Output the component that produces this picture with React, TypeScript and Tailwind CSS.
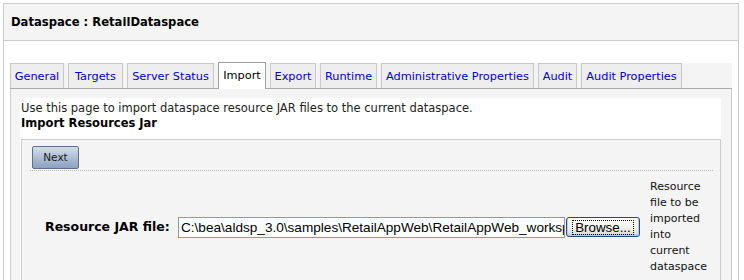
import React from 'react';

const tabs = [
  { label: 'General', w: 'w-[54px]' },
  { label: 'Targets', w: 'w-[55px]' },
  { label: 'Server Status', w: 'w-[87px]' },
  { label: 'Import', w: 'w-[48px]', active: true },
  { label: 'Export', w: 'w-[46px]' },
  { label: 'Runtime', w: 'w-[57px]' },
  { label: 'Administrative Properties', w: 'w-[153px]' },
  { label: 'Audit', w: 'w-[39px]' },
  { label: 'Audit Properties', w: 'w-[101px]' },
];

function Tab({ label, w, active }: { label: string; w: string; active?: boolean }) {
  if (active) {
    return (
      <div className={`${w} h-[27px] -mb-[1px] bg-white border border-b-0 border-[#9c9c9c] flex items-center justify-center pt-[1px] text-black whitespace-nowrap`}>
        {label}
      </div>
    );
  }
  return (
    <div className={`${w} h-[25px] bg-[#eeeeee] border border-b-0 border-[#c8c8c8] flex items-center justify-center pt-[2px] text-[#0000cc] whitespace-nowrap`}>
      {label}
    </div>
  );
}

export default function App() {
  return (
    <div className="h-[280px] overflow-hidden bg-white pl-[3px] pt-[3px] pr-[5px] font-['DejaVu_Sans',sans-serif] text-[11px] text-[#111]">
      <div className="border border-[#cccccc] pb-[40px]">
        <div className="h-[37px] bg-[#f4f4f4] border-b border-[#cccccc] flex items-center pl-[7px] pt-[1px] font-bold text-[11.6px] text-black">
          Dataspace : RetailDataspace
        </div>

        <div className="px-[6px] pt-[22px]">
          {/* tab strip */}
          <div className="flex items-end gap-[4px] h-[26px] bg-[#f4f4f4] border-b border-[#a9a9a9] text-[11.3px]">
            {tabs.map(t => (
              <Tab key={t.label} label={t.label} w={t.w} active={t.active} />
            ))}
          </div>

          {/* panel */}
          <div className="bg-[#f4f4f4] border-x border-[#cccccc] pl-[9px] pr-[10px] pt-[9px]">
            <div className="bg-white">
              <div className="pl-[1px] pt-[3px] leading-[14px] text-[11.5px] text-[#222]">
                Use this page to import dataspace resource JAR files to the current dataspace.
              </div>
              <div className="pl-[1px] mt-[1px] leading-[14px] font-bold text-[11.5px] text-black">
                Import Resources Jar
              </div>
              <div className="h-[9px]" />

              <div className="ml-[1px] border border-[#cccccc] bg-[#f4f4f4] pb-[30px]">
                <div className="ml-[8px] mr-[7px] pl-[2px] pt-[6px] pb-[1px] border-b border-dotted border-[#b8b8b8]">
                  <button className="w-[47px] h-[23px] rounded-[2px] border border-[#5b7190] bg-linear-to-b from-[#d3dded] to-[#8ca2bf] text-[10.5px] text-[#1a1a1a]">
                    Next
                  </button>
                </div>

                <div className="flex items-center pl-[23px] pt-[8px]">
                  <div className="w-[133px] font-bold text-[12.5px] text-black">Resource JAR file:</div>
                  <input
                    readOnly
                    value="C:\bea\aldsp_3.0\samples\RetailAppWeb\RetailAppWeb_workspace\RetailDataspace.jar"
                    className="w-[387px] h-[21px] border border-[#7f9db9] bg-white pl-[2px] outline-none font-['Liberation_Sans',Arial,sans-serif] text-[13.6px] text-black"
                  />
                  <button className="ml-[1px] w-[74px] h-[20px] rounded-[3px] border border-[#1c4a8c] bg-linear-to-b from-[#ffffff] via-[#f2f2ee] to-[#dcd8cc] shadow-[inset_0_-1px_0_1px_#b6cdf0] flex items-center justify-center font-['Liberation_Sans',Arial,sans-serif] text-[13.33px] text-black">
                    <span className="border border-dotted border-black px-[2px] leading-[13px]">Browse...</span>
                  </button>
                  <div className="ml-[10px] w-[62px] leading-[16px] text-[#111]">
                    Resource file to be imported into current dataspace
                  </div>
                </div>
              </div>
            </div>
          </div>
        </div>
      </div>
    </div>
  );
}
